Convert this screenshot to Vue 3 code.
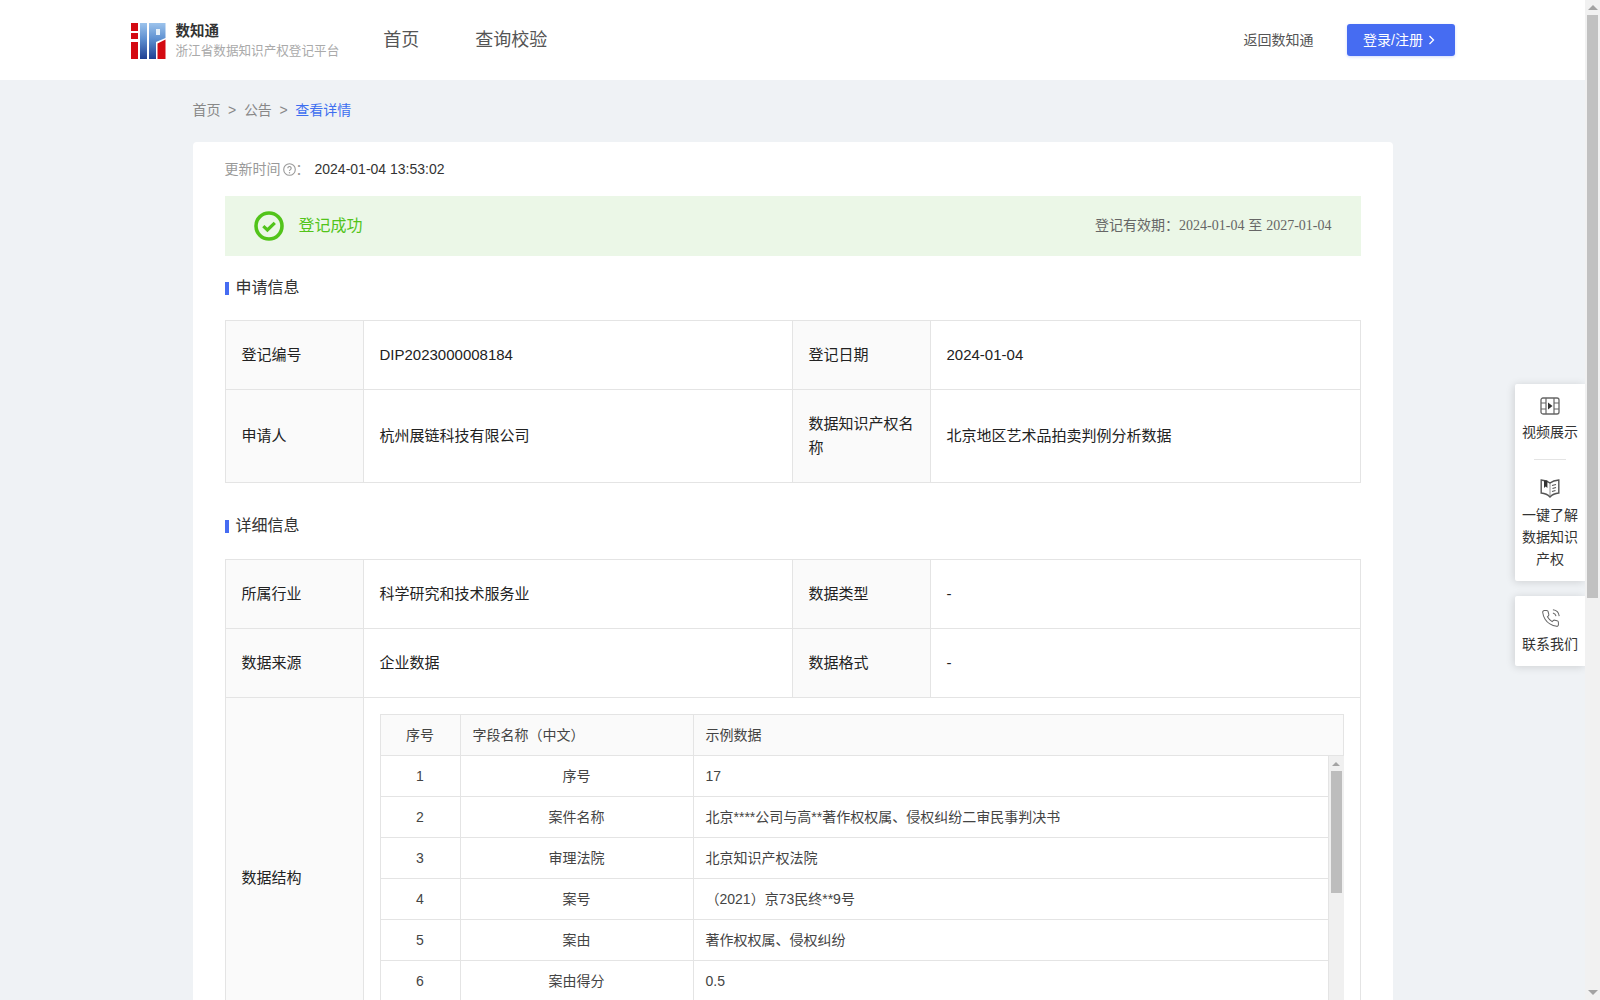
<template>
  <div class="page">
    <div class="content">
      <header class="header">
        <div class="header-inner">
          <div class="logo">
            <svg class="logo-mark" width="35" height="36" viewBox="0 0 35 36">
              <defs>
                <linearGradient id="logoBlue" x1="0" y1="0" x2="0" y2="1">
                  <stop offset="0" stop-color="#9cc3ec" />
                  <stop offset="0.45" stop-color="#5d8fd0" />
                  <stop offset="1" stop-color="#1f3f92" />
                </linearGradient>
              </defs>
              <rect x="0" y="0" width="7" height="8" fill="#d40a12" />
              <rect x="0" y="10" width="7" height="6" fill="#d40a12" />
              <rect x="0" y="19" width="7" height="17" fill="#d40a12" />
              <rect x="9" y="0" width="7" height="36" fill="url(#logoBlue)" />
              <path d="M18 0H34.5V15L25 19V36H18Z" fill="url(#logoBlue)" />
              <rect x="25" y="6" width="4" height="6" fill="#e6f0fa" />
              <path d="M26.5 20.5L34.5 16.5V36H26.5Z" fill="#d40a12" />
            </svg>
            <div class="logo-text">
              <div class="logo-name">数知通</div>
              <div class="logo-sub">浙江省数据知识产权登记平台</div>
            </div>
          </div>
          <nav class="nav">
            <a class="nav-item">首页</a>
            <a class="nav-item">查询校验</a>
          </nav>
          <a class="back-link">返回数知通</a>
          <button class="login-btn">
            <span class="login-text">登录/注册</span>
            <svg width="7" height="10" viewBox="0 0 7 10"><path d="M1.5 1L5.5 5L1.5 9" fill="none" stroke="#fff" stroke-width="1.3" /></svg>
          </button>
        </div>
      </header>

      <main class="main">
        <div class="crumbs">
          <span>首页</span>
          <span class="sep">&gt;</span>
          <span>公告</span>
          <span class="sep">&gt;</span>
          <span class="crumb-on">查看详情</span>
        </div>

        <section class="card">
          <div class="update-line">
            <span class="update-label">更新时间</span>
            <svg class="help" width="13" height="13" viewBox="0 0 13 13">
              <circle cx="6.5" cy="6.5" r="5.8" fill="none" stroke="#999" stroke-width="1.1" />
              <path d="M4.8 5.2a1.7 1.7 0 1 1 2.6 1.4c-.6.4-.9.7-.9 1.4" fill="none" stroke="#999" stroke-width="1.1" />
              <circle cx="6.5" cy="9.8" r=".7" fill="#999" />
            </svg>
            <span class="update-label colon">：</span>
            <span class="update-time">2024-01-04 13:53:02</span>
          </div>

          <div class="banner">
            <svg width="30" height="30" viewBox="0 0 30 30">
              <circle cx="15" cy="15" r="13" fill="none" stroke="#52c41a" stroke-width="3.6" />
              <path d="M9.3 15.2L13.4 19L20.8 11.8" fill="none" stroke="#52c41a" stroke-width="3.2" />
            </svg>
            <span class="banner-title">登记成功</span>
            <span class="banner-range">登记有效期：<span class="serif">2024-01-04</span> 至 <span class="serif">2027-01-04</span></span>
          </div>

          <h3 class="block-title first">申请信息</h3>
          <table class="info">
            <colgroup>
              <col class="col-label" />
              <col class="col-value" />
              <col class="col-label" />
              <col />
            </colgroup>
            <tbody>
              <tr>
                <td class="label">登记编号</td>
                <td>DIP2023000008184</td>
                <td class="label">登记日期</td>
                <td>2024-01-04</td>
              </tr>
              <tr>
                <td class="label">申请人</td>
                <td>杭州展链科技有限公司</td>
                <td class="label">数据知识产权名称</td>
                <td>北京地区艺术品拍卖判例分析数据</td>
              </tr>
            </tbody>
          </table>

          <h3 class="block-title">详细信息</h3>
          <table class="info">
            <colgroup>
              <col class="col-label" />
              <col class="col-value" />
              <col class="col-label" />
              <col />
            </colgroup>
            <tbody>
              <tr>
                <td class="label">所属行业</td>
                <td>科学研究和技术服务业</td>
                <td class="label">数据类型</td>
                <td>-</td>
              </tr>
              <tr>
                <td class="label">数据来源</td>
                <td>企业数据</td>
                <td class="label">数据格式</td>
                <td>-</td>
              </tr>
              <tr>
                <td class="label">数据结构</td>
                <td colspan="3">
                  <div class="fields">
                    <div class="fields-head">
                      <div class="cell cell-no">序号</div>
                      <div class="cell cell-name">字段名称（中文）</div>
                      <div class="cell cell-sample">示例数据</div>
                    </div>
                    <div class="fields-body">
                      <div class="fields-rows">
                        <div v-for="row in fields" :key="row.no" class="fields-row">
                          <div class="cell cell-no">{{ row.no }}</div>
                          <div class="cell cell-name center">{{ row.name }}</div>
                          <div class="cell cell-sample">{{ row.sample }}</div>
                        </div>
                      </div>
                      <div class="inner-bar">
                        <div class="arrow-up small"></div>
                        <div class="inner-thumb"></div>
                      </div>
                    </div>
                  </div>
                </td>
              </tr>
            </tbody>
          </table>
        </section>
      </main>
    </div>

    <!-- 截图里没有真实滚动条，这里画出来 -->
    <div class="page-bar">
      <div class="arrow-up"></div>
      <div class="page-thumb"></div>
      <div class="arrow-down"></div>
    </div>

    <aside class="side">
      <div class="side-box">
        <div class="side-item">
          <svg width="20" height="18" viewBox="0 0 20 18">
            <rect x="1" y="1" width="18" height="16" rx="2" fill="none" stroke="#666" stroke-width="1.3" />
            <path d="M6 1V17M14 1V17M1 6H6M1 12H6M14 6H19M14 12H19" fill="none" stroke="#666" stroke-width="1.2" />
            <path d="M8 5.5L12.5 9L8 12.5Z" fill="#333" />
          </svg>
          <span>视频展示</span>
        </div>
        <div class="side-line"></div>
        <div class="side-item">
          <svg width="20" height="20" viewBox="0 0 20 20">
            <path d="M10 5C8 3.4 5 2.3 1.2 2V15C5 15.4 8 16.8 10 19C12 16.8 15 15.4 18.8 15V2C15 2.3 12 3.4 10 5Z" fill="none" stroke="#555" stroke-width="1.4" />
            <path d="M10 5V18.5" fill="none" stroke="#666" stroke-width=".7" />
            <path d="M4 2.6H7.4V10L5.7 8.6L4 10Z" fill="#333" />
            <path d="M12 7.5L16 6.5M12.5 10.5L16 9.5M12 13.5L15.5 12.5" fill="none" stroke="#555" stroke-width="1.2" />
          </svg>
          <span>一键了解数据知识产权</span>
        </div>
      </div>
      <div class="side-box">
        <div class="side-item">
          <svg width="19" height="19" viewBox="0 0 24 24">
            <path d="M15.05 5A5 5 0 0 1 19 8.95M15.05 1A9 9 0 0 1 23 8.94m-1 7.98v3a2 2 0 0 1-2.18 2 19.79 19.79 0 0 1-8.63-3.07 19.5 19.5 0 0 1-6-6 19.79 19.79 0 0 1-3.07-8.67A2 2 0 0 1 4.11 2h3a2 2 0 0 1 2 1.72 12.84 12.84 0 0 0 .7 2.81 2 2 0 0 1-.45 2.11L8.09 9.91a16 16 0 0 0 6 6l1.27-1.27a2 2 0 0 1 2.11-.45 12.84 12.84 0 0 0 2.81.7A2 2 0 0 1 22 16.92z" fill="none" stroke="#666" stroke-width="1.3" />
          </svg>
          <span class="side-last">联系我们</span>
        </div>
      </div>
    </aside>
  </div>
</template>

<script setup>
// 字段示例数据
const fields = [
  { no: 1, name: "序号", sample: "17" },
  { no: 2, name: "案件名称", sample: "北京****公司与高**著作权权属、侵权纠纷二审民事判决书" },
  { no: 3, name: "审理法院", sample: "北京知识产权法院" },
  { no: 4, name: "案号", sample: "（2021）京73民终**9号" },
  { no: 5, name: "案由", sample: "著作权权属、侵权纠纷" },
  { no: 6, name: "案由得分", sample: "0.5" },
];
</script>

<style scoped>
.page {
  position: relative;
  height: 100vh;
  display: flex;
  overflow: hidden;
  background: #eff2f5;
  font-family: "Liberation Sans", "Noto Sans CJK SC", sans-serif;
  font-size: 14px;
  color: #333;
}
.content {
  flex: 1;
  min-width: 0;
}
.page-bar {
  position: relative;
  z-index: 1;
  width: 15px;
  background: #f1f1f1;
  display: flex;
  flex-direction: column;
  align-items: center;
}
.page-thumb {
  width: 11px;
  height: 583px;
  background: #c1c1c1;
}
.arrow-up,
.arrow-down {
  width: 0;
  height: 0;
  border-left: 5px solid transparent;
  border-right: 5px solid transparent;
}
.arrow-up {
  margin: 5px 0;
  border-bottom: 5px solid #a3a3a3;
}
.arrow-down {
  margin: auto 0 5px;
  border-top: 5px solid #a3a3a3;
}
.arrow-up.small {
  margin: 6px 0 5px;
  border-left-width: 4px;
  border-right-width: 4px;
  border-bottom-width: 4px;
}

.header {
  height: 80px;
  background: #fff;
}
.header-inner {
  width: 1324px;
  height: 100%;
  margin: 0 auto;
  display: flex;
  align-items: center;
}
.logo {
  display: flex;
  align-items: center;
}
.logo-mark {
  margin-top: 1px;
}
.logo-text {
  margin-left: 10px;
}
.logo-name {
  font-size: 14.5px;
  line-height: 20px;
  font-weight: 700;
  color: #333;
}
.logo-sub {
  font-size: 12.6px;
  line-height: 18px;
  margin-top: 1px;
  color: #aaa;
}
.nav {
  flex: 1;
  display: flex;
  gap: 56px;
  margin-left: 44px;
}
.nav-item {
  font-size: 18px;
  line-height: 26px;
  color: #555;
}
.back-link {
  color: #555;
  line-height: 20px;
  padding-bottom: 1px;
}
.login-btn {
  width: 108px;
  height: 32px;
  margin-left: 33px;
  padding: 0 3px 0 0;
  border: none;
  border-radius: 3px;
  background: #466cf2;
  box-shadow: 0 1px 3px rgba(70, 108, 242, 0.25);
  color: #fff;
  font: inherit;
  display: flex;
  align-items: center;
  justify-content: center;
  gap: 5px;
}
.login-text {
  padding-bottom: 2px;
}

.main {
  width: 1200px;
  margin: 0 auto;
}
.crumbs {
  height: 62px;
  line-height: 61px;
  color: #888;
}
.sep {
  margin: 0 7.6px;
}
.crumb-on {
  color: #3e6ff0;
}
.card {
  min-height: 1480px;
  box-sizing: border-box;
  padding: 17px 32px 0;
  background: #fff;
  border-radius: 4px;
}
.update-line {
  display: flex;
  align-items: center;
  height: 20px;
}
.update-label {
  color: #999;
  padding-bottom: 2px;
}
.help {
  margin-left: 2px;
}
.colon {
  width: 19px;
}
.update-time {
  color: #333;
}
.banner {
  height: 60px;
  margin-top: 17px;
  padding: 0 29px;
  display: flex;
  align-items: center;
  background: #ebf7e7;
}
.banner-title {
  margin-left: 15px;
  flex: 1;
  padding-bottom: 4px;
  font-size: 16px;
  color: #52c41a;
}
.banner-range {
  padding-bottom: 4px;
  color: #666;
}
.serif {
  font-family: "Liberation Serif", "Noto Sans CJK SC", serif;
}
.block-title {
  margin: 37px 0 26px;
  padding-left: 7px;
  border-left: 4px solid #466cf2;
  height: 13px;
  line-height: 11px;
  font-size: 16px;
  font-weight: 400;
  color: #333;
}
.block-title.first {
  margin: 26px 0 25px;
}
.info {
  width: 100%;
  table-layout: fixed;
  border-collapse: collapse;
}
.col-label {
  width: 138px;
}
.col-value {
  width: 429px;
}
.info td {
  padding: 21.5px 16px 22.5px;
  border: 1px solid #e4e4e4;
  font-size: 15px;
  line-height: 24px;
  color: #222;
}
.info td.label {
  background: #fafafa;
}
.fields {
  margin: -5.5px 0 -6.5px;
  border-left: 1px solid #e4e4e4;
  font-size: 14px;
  line-height: 20px;
  color: #444;
}
.fields-head {
  display: flex;
  height: 40px;
  border: solid #e4e4e4;
  border-width: 1px 1px 1px 0;
  background: #fafafa;
}
.fields-body {
  display: flex;
  height: 287px;
}
.fields-rows {
  flex: 1;
  min-width: 0;
}
.inner-bar {
  box-sizing: border-box;
  width: 16px;
  background: #f0f0f0;
  border-left: 1px solid #e4e4e4;
  display: flex;
  flex-direction: column;
  align-items: center;
}
.inner-thumb {
  width: 11px;
  height: 122px;
  background: #bdbdbd;
}
.fields-row {
  display: flex;
  height: 40px;
  border-bottom: 1px solid #e4e4e4;
}
.cell {
  box-sizing: border-box;
  display: flex;
  align-items: center;
  padding: 0 12px;
}
.cell-no {
  width: 80px;
  justify-content: center;
  border-right: 1px solid #e4e4e4;
}
.cell-name {
  width: 233px;
  border-right: 1px solid #e4e4e4;
}
.cell-name.center {
  justify-content: center;
}
.cell-sample {
  flex: 1;
}

.side {
  position: absolute;
  top: 384px;
  right: 15px;
  width: 70px;
  display: flex;
  flex-direction: column;
  gap: 15px;
}
.side-box {
  padding: 13px 0 10px;
  background: #fff;
  box-shadow: -1px 1px 8px rgba(0, 0, 0, 0.14);
  border-radius: 2px 0 0 2px;
}
.side-box:first-child {
  padding-bottom: 11px;
}
.side-item {
  display: flex;
  flex-direction: column;
  align-items: center;
  line-height: 22px;
  text-align: center;
  padding: 0 7px;
  color: #333;
}
.side-item span {
  margin-top: 6px;
}
.side-item .side-last {
  margin: 5px 0 1px;
}
.side-line {
  width: 32px;
  height: 1px;
  margin: 16px auto 18px;
  background: #e4e4e4;
}
</style>

<style>
html,
body {
  margin: 0;
  overflow: hidden;
}
</style>
